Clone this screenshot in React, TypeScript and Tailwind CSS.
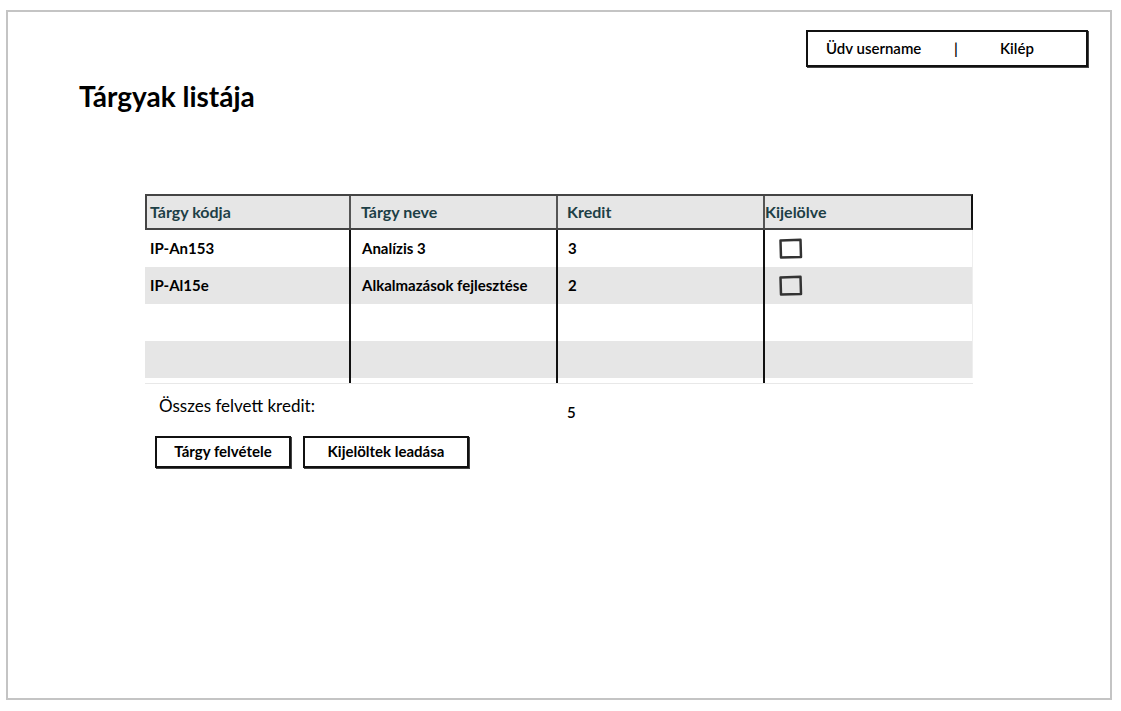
import React from "react";

const font = { fontFamily: "Lato, 'Noto Sans', sans-serif" };

function Check() {
  return (
    <svg width="26" height="22" viewBox="0 0 26 22" className="block">
      <path d="M2.5 2.5 L22.5 1.8 L23 19 L3 19.5 Z" fill="none" stroke="#333" strokeWidth="2.5" strokeLinejoin="round" />
    </svg>
  );
}

const rows = [
  { code: "IP-An153", name: "Analízis 3", kredit: "3", check: true },
  { code: "IP-Al15e", name: "Alkalmazások fejlesztése", kredit: "2", check: true },
  { code: "", name: "", kredit: "", check: false },
  { code: "", name: "", kredit: "", check: false },
];

export default function App() {
  return (
    <div className="w-[1121px] h-[711px] bg-white pt-[10px] pl-[6px] text-black" style={font}>
      <div className="w-[1106px] h-[690px] border-2 border-[#c4c4c4] flex flex-col">
        <div className="flex justify-end pr-[22px] mt-[18px]">
          <div className="w-[282px] h-[37px] border-2 border-[#111] shadow-[1px_1px_0_#444] flex items-center pl-[18px] text-[15px] font-semibold">
            <span className="w-[128px]">Üdv username</span>
            <span className="w-[46px] text-black">|</span>
            <span>Kilép</span>
          </div>
        </div>
        <h1 className="ml-[71px] mt-[12px] text-[28px] leading-[34px] font-bold">Tárgyak listája</h1>

        <div className="ml-[137px] mt-[81px] w-[828px]">
          <div className="grid grid-cols-[202px_207px_207px_208px] h-[36px] bg-[#e6e6e6] border-2 border-[#444] border-r-[#111] text-[16px] font-bold text-[#1d3f46]">
            <div className="pl-[3px] flex items-center">Tárgy kódja</div>
            <div className="pl-[10px] flex items-center border-l-2 border-[#555]">Tárgy neve</div>
            <div className="pl-[9px] flex items-center border-l-2 border-[#555]">Kredit</div>
            <div className="pl-[0px] flex items-center border-l-2 border-[#555]">Kijelölve</div>
          </div>
          {rows.map((r, i) => (
            <div
              key={i}
              className={`grid grid-cols-[204px_207px_207px_210px] h-[37px] text-[15px] font-bold ${i % 2 === 1 ? "bg-[#e6e6e6]" : "bg-white"} border-r border-[#eee]`}
            >
              <div className="pl-[5px] flex items-center">{r.code}</div>
              <div className="pl-[11px] flex items-center border-l-2 border-[#111]">{r.name}</div>
              <div className="pl-[10px] flex items-center border-l-2 border-[#111]">{r.kredit}</div>
              <div className="pl-[13px] flex items-center border-l-2 border-[#111]">{r.check ? <Check /> : null}</div>
            </div>
          ))}
          <div className="grid grid-cols-[204px_207px_207px_210px] h-[6px] border-b border-[#e8e8e8]">
            <div />
            <div className="border-l-2 border-[#111]" />
            <div className="border-l-2 border-[#111]" />
            <div className="border-l-2 border-[#111]" />
          </div>
        </div>

        <div className="ml-[151px] mt-[9px] flex items-start">
          <span className="w-[408px] text-[17px]">Összes felvett kredit:</span>
          <span className="mt-[8px] text-[15px] font-semibold">5</span>
        </div>

        <div className="ml-[147px] mt-[12px] flex gap-[12px] text-[15px] font-bold">
          <div className="w-[136px] h-[32px] border-2 border-[#111] shadow-[1px_1px_0_#444] flex items-center justify-center">Tárgy felvétele</div>
          <div className="w-[166px] h-[32px] border-2 border-[#111] shadow-[1px_1px_0_#444] flex items-center justify-center">Kijelöltek leadása</div>
        </div>
      </div>
    </div>
  );
}
